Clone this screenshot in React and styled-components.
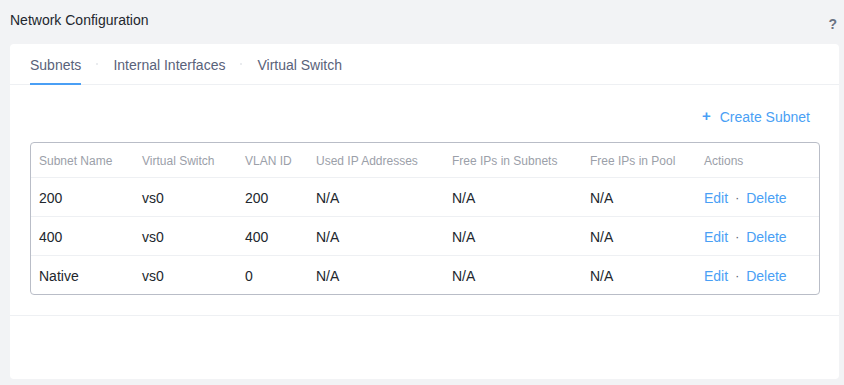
import React from "react";
import styled, { createGlobalStyle } from "styled-components";

const Global = createGlobalStyle`
  html, body { margin: 0; padding: 0; }
  body {
    background: #f2f3f5;
    font-family: "Liberation Sans", Arial, sans-serif;
    color: #22272e;
  }
`;

const Page = styled.div`
  width: 844px;
  height: 385px;
  display: flex;
  flex-direction: column;
  box-sizing: border-box;
`;

const TopBar = styled.div`
  height: 44px;
  display: flex;
  align-items: center;
  justify-content: space-between;
  padding: 0 7px 4px 10px;
  box-sizing: border-box;
`;

const Title = styled.h1`
  margin: 0;
  font-size: 14px;
  font-weight: 400;
  color: #22272e;
`;

const Help = styled.span`
  font-size: 14px;
  font-weight: 700;
  color: #6b7384;
  position: relative;
  top: 4px;
`;

const Card = styled.section`
  margin: 0 5px 0 10px;
  height: 335px;
  background: #fff;
  border-radius: 4px;
  display: flex;
  flex-direction: column;
`;

const Tabs = styled.nav`
  display: flex;
  align-items: stretch;
  height: 40px;
  padding-left: 20px;
  border-bottom: 1px solid #eef0f3;
`;

const Tab = styled.div`
  display: flex;
  align-items: center;
  padding-top: 2px;
  font-size: 14px;
  color: #59627a;
  box-sizing: border-box;
  border-bottom: 2px solid ${(p) => (p.$active ? "#4a9ff5" : "transparent")};
  margin-bottom: -1px;
`;

const TabDot = styled.span`
  width: 32px;
  display: flex;
  align-items: center;
  justify-content: center;
  &::before {
    content: "";
    width: 2px;
    height: 2px;
    border-radius: 50%;
    background: #e3e6ea;
  }
`;

const Content = styled.div`
  padding: 17px 19px 0 20px;
`;

const Toolbar = styled.div`
  height: 30px;
  margin-bottom: 10px;
  display: flex;
  align-items: center;
  justify-content: flex-end;
  padding-right: 10px;
`;

const CreateLink = styled.a`
  display: flex;
  align-items: center;
  gap: 9px;
  font-size: 14px;
  color: #4a9ff5;
  cursor: pointer;
`;

const Plus = styled.span`
  font-size: 15px;
  font-weight: 700;
  line-height: 1;
  position: relative;
  top: -2px;
`;

const Table = styled.div`
  border: 1px solid #b9bdc7;
  border-radius: 4px;
`;

const cols = "103px 103px 71px 136px 138px 114px 1fr";

const HeadRow = styled.div`
  display: grid;
  grid-template-columns: ${cols};
  height: 32px;
  padding-top: 2px;
  align-items: center;
  padding-left: 8px;
  font-size: 12px;
  color: #9ba0a9;
`;

const Row = styled.div`
  display: grid;
  grid-template-columns: ${cols};
  height: 36px;
  padding-top: 2px;
  align-items: center;
  padding-left: 8px;
  border-top: 1px solid #eef0f3;
  font-size: 14px;
  color: #22272e;
`;

const Actions = styled.div`
  display: flex;
  align-items: center;
  gap: 7px;
  color: #4a9ff5;
`;

const Sep = styled.span`
  color: #555c66;
  font-size: 12px;
`;

const Footer = styled.div`
  margin-top: 20px;
  border-top: 1px solid #eef0f3;
  flex: 1;
`;

const rows = [
  ["200", "vs0", "200"],
  ["400", "vs0", "400"],
  ["Native", "vs0", "0"],
];

export default function App() {
  return (
    <Page>
      <Global />
      <TopBar>
        <Title>Network Configuration</Title>
        <Help>?</Help>
      </TopBar>
      <Card>
        <Tabs>
          <Tab $active>Subnets</Tab>
          <TabDot />
          <Tab>Internal Interfaces</Tab>
          <TabDot />
          <Tab>Virtual Switch</Tab>
        </Tabs>
        <Content>
          <Toolbar>
            <CreateLink>
              <Plus>+</Plus>
              Create Subnet
            </CreateLink>
          </Toolbar>
          <Table>
            <HeadRow>
              <div>Subnet Name</div>
              <div>Virtual Switch</div>
              <div>VLAN ID</div>
              <div>Used IP Addresses</div>
              <div>Free IPs in Subnets</div>
              <div>Free IPs in Pool</div>
              <div>Actions</div>
            </HeadRow>
            {rows.map((r) => (
              <Row key={r[0]}>
                <div>{r[0]}</div>
                <div>{r[1]}</div>
                <div>{r[2]}</div>
                <div>N/A</div>
                <div>N/A</div>
                <div>N/A</div>
                <Actions>
                  <span>Edit</span>
                  <Sep>·</Sep>
                  <span>Delete</span>
                </Actions>
              </Row>
            ))}
          </Table>
        </Content>
        <Footer />
      </Card>
    </Page>
  );
}
